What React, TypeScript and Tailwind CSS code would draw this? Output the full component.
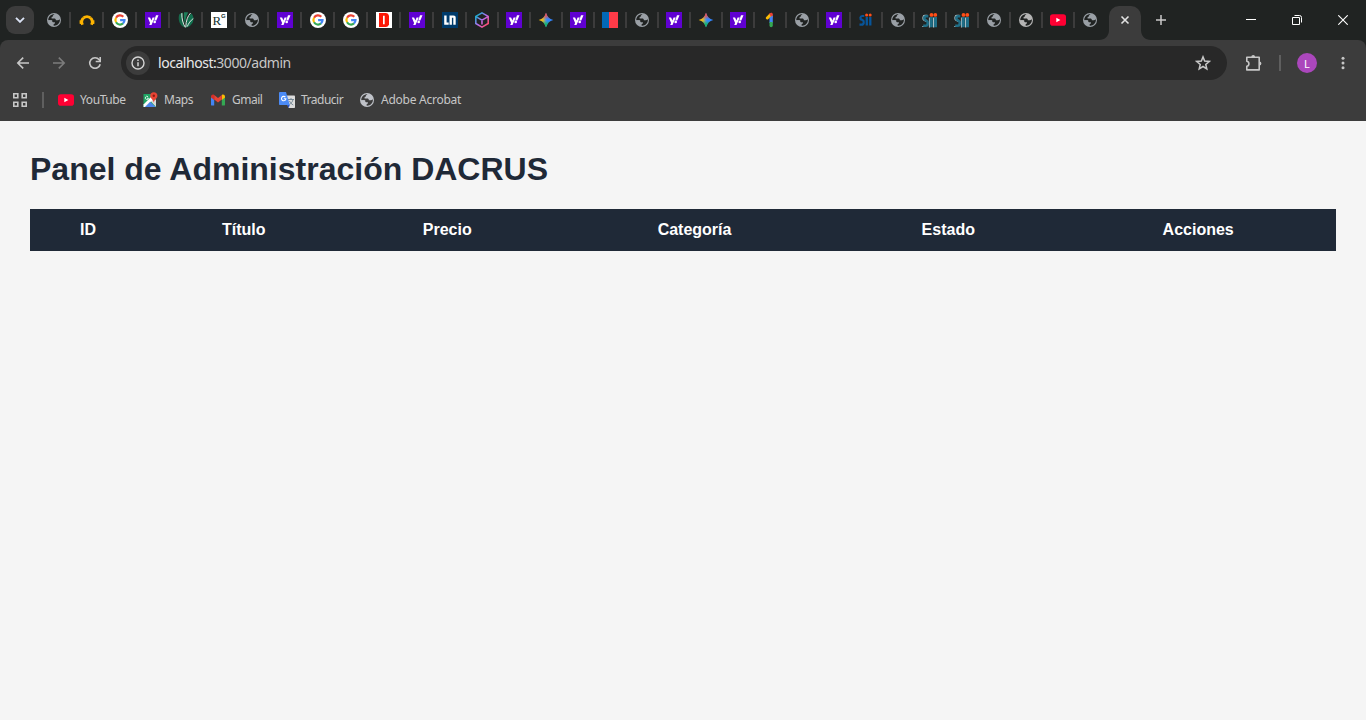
import type { ReactNode } from "react";
import clsx from "clsx";

type Favicon =
  | "globe"
  | "globeLight"
  | "arch"
  | "google"
  | "yahoo"
  | "leaf"
  | "rg"
  | "d"
  | "ln"
  | "cube"
  | "gemini"
  | "flag"
  | "one"
  | "sii"
  | "siiGray"
  | "youtube";

const tabs: Favicon[] = [
  "globe", "arch", "google", "yahoo", "leaf", "rg", "globe", "yahoo", "google",
  "google", "d", "yahoo", "ln", "cube", "yahoo", "gemini", "yahoo", "flag",
  "globe", "yahoo", "gemini", "yahoo", "one", "globe", "yahoo", "sii", "globe",
  "siiGray", "siiGray", "globe", "globeLight", "youtube", "globe",
];

// tabs shrink by one pixel after this index
const WIDE_TABS = 13;

const columns = ["ID", "Título", "Precio", "Categoría", "Estado", "Acciones"];

const Svg = ({ children }: { children: ReactNode }) => (
  <svg viewBox="0 0 16 16" className="block size-4 shrink-0">
    {children}
  </svg>
);

const Globe = ({ color, land }: { color: string; land: string }) => (
  <Svg>
    <circle cx="8" cy="8" r="7" fill={color} />
    <path
      d="M8.6 2.3 6.9 3.4v1.2L5.6 5.1v1.4h2.8c.8 0 1.4.6 1.4 1.3v.5h2.1c.7 0 1.2-.5 1.6-1l.4.7c0 3-2.5 5.6-5.7 5.7l-.8-.1v-1.4l1.5-.6v-1.3H7.6c-.9 0-1.4-.6-1.4-1.4v-.6H2.3C2.1 5 4.700 2.200 8.600 2.300z"
      fill={land}
    />
    <path d="M9.500 2.500 9 4.300l1 1.200 1.500.1 1-.9C11.900 3.600 10.800 2.700 9.500 2.500z" fill={color} />
    <path d="M2.200 8.300 5.500 8.300 6.200 10.600 7.400 11.400v2.400C4.500 13.500 2.300 11.200 2.200 8.300z" fill={color} />
  </Svg>
);

const YouTube = () => (
  <Svg>
    <rect x="0" y="2.3" width="16" height="11.4" rx="2.8" fill="#ff0033" />
    <path d="M6.300 5.800 10.400 8l-4.100 2.300z" fill="#fff" />
  </Svg>
);

const Google = () => (
  <Svg>
    <circle cx="8" cy="8" r="8" fill="#fff" />
    <g fill="none" strokeWidth="2.200">
      <path d="M4.050 5.700A4.560 4.560 0 0 1 11.300 4.850" stroke="#ea4335" />
      <path d="M4.050 10.300A4.560 4.560 0 0 1 4.050 5.700" stroke="#fbbc05" />
      <path d="M11 11.450A4.560 4.560 0 0 1 4.050 10.300" stroke="#34a853" />
      <path d="M8.100 8.200h4.400A4.560 4.560 0 0 1 11 11.450" stroke="#4285f4" />
    </g>
  </Svg>
);

const STAR = "M8 .7C9.200 4.700 11.300 6.800 15.300 8 11.300 9.200 9.200 11.300 8 15.300 6.800 11.300 4.700 9.200.700 8 4.700 6.800 6.800 4.700 8 .700z";

const Gemini = () => (
  <Svg>
    <defs>
      <linearGradient id="gemX" x1="0" x2="1">
        <stop offset="0.1" stopColor="#fbc10b" />
        <stop offset="0.3" stopColor="#e0b92c" />
        <stop offset="0.5" stopColor="#4c92e0" />
        <stop offset="0.6" stopColor="#3186ff" />
      </linearGradient>
      <linearGradient id="gemY" x1="0" y1="0" x2="0" y2="1">
        <stop offset="0.15" stopColor="#f8494a" />
        <stop offset="0.45" stopColor="#f8494a" stopOpacity="0" />
        <stop offset="0.55" stopColor="#12b76a" stopOpacity="0" />
        <stop offset="0.8" stopColor="#12b76a" />
      </linearGradient>
    </defs>
    <path d={STAR} fill="url(#gemX)" />
    <path d={STAR} fill="url(#gemY)" />
  </Svg>
);

const Sii = ({ gray }: { gray?: boolean }) => (
  <Svg>
    {gray && (
      <g stroke="#a9bcc2" strokeWidth="1.200" fill="none">
        <path d="M5.500 3.300H2.700C.600 3.300.500 7 1.600 8L4.200 9.500M.300 14.500H4M7.500 5.500v10M11.600 5.500v10" />
      </g>
    )}
    {gray ? (
      <g stroke="#1f6e87" fill="none">
        <path d="M6.300 4.300H4.200C2 4.300 1.900 7.500 3.500 8.100l1 .6c2 1.100 1.500 5-.7 5H1.200" strokeWidth="2.600" />
        <path d="M9.300 5v10.300M13.500 5v10.300" strokeWidth="3" />
      </g>
    ) : (
      <g stroke="#07559a" fill="none">
        <path d="M6.300 4H4.200C2 4 1.900 7 3.500 7.600l1 .5c2 1 1.500 4.500-.7 4.500H1.500" strokeWidth="2.200" />
        <path d="M8.800 5v8.500M12.300 5v8.500" strokeWidth="2.300" />
      </g>
    )}
    <circle cx={gray ? 9.5 : 8.6} cy="2.9" r={gray ? 1.9 : 1.5} fill="#ff4e17" />
    <circle cx={gray ? 13.3 : 12.2} cy="2.9" r={gray ? 1.9 : 1.5} fill="#ff4e17" />
  </Svg>
);

const TabIcon = ({ name }: { name: Favicon }) => {
  switch (name) {
    case "globe":
      return <Globe color="#9aa0a6" land="#202322" />;
    case "globeLight":
      return <Globe color="#b5b5b5" land="#202322" />;
    case "youtube":
      return <YouTube />;
    case "google":
      return <Google />;
    case "gemini":
      return <Gemini />;
    case "sii":
      return <Sii />;
    case "siiGray":
      return <Sii gray />;
    case "arch":
      return (
        <Svg>
          <path d="M3.500 12.700C1.300 7.800 4.500 4.700 8 4.700s6.700 3.100 4.500 8" fill="none" stroke="#fdb400" strokeWidth="2.700" />
          <path d="M.6 8.300 3 8.600v3.700l-2.400-.6zM15.400 8.300l-2.400.3v3.700l2.400-.6z" fill="#fdb400" />
          <path d="m3.400 4.700 1 1.300M12.600 4.700l-1 1.300" stroke="#6b500c" strokeWidth=".6" />
        </Svg>
      );
    case "yahoo":
      return (
        <svg viewBox="0 0 16 16" className="block size-4 shrink-0 bg-[#6001d2]">
          <path d="M2.800 5.600h2.300l1.300 2.900 1.200-2.900h2.200L6.500 13.100H4.200l.9-2.100z" fill="#fff" />
          <path d="M11 3.200h2.500L11.300 8.500H9.200z" fill="#fff" />
          <circle cx="9.700" cy="10" r="1.300" fill="#fff" />
        </svg>
      );
    case "leaf":
      return (
        <Svg>
          <path d="M1.200 2.500C2.300 1.500 3.500.900 5 .500 4.500 5 5.300 10.500 7 15.600 2.300 14-.500 8.500 1.200 2.500z" fill="#176b4c" />
          <path d="M6 .300c1.500-.3 3-.2 4.200.2C8 4 7 8.500 7.300 13 6 9 5.600 4.500 6 .300z" fill="#1c7d59" />
          <path d="M8 15.700C7.600 9 9.500 4.300 13.500 1.500c3.500 4.500 2.500 11.700-5.500 14.200z" fill="#12704f" />
          <path d="M3.800 1.200C3.600 6.500 5 12 7.400 15.500M7.800 15C8 8.500 9.700 4 12.600 1M9.300 14.500C10.500 11.500 12.500 8.500 15.300 6.500" fill="none" stroke="#dde6e1" strokeWidth="1" />
        </Svg>
      );
    case "rg":
      return (
        <span className="relative block size-4 shrink-0 overflow-hidden bg-white text-[#17322e]">
          <span className="absolute top-[2px] left-[1.5px] font-['Liberation_Serif',serif] text-[13px] leading-[14px]">R</span>
          <span className="absolute top-[1px] left-[10px] font-['Liberation_Sans',sans-serif] text-[6px] leading-[7px] font-bold">G</span>
        </span>
      );
    case "d":
      return (
        <Svg>
          <path d="M0 0h16v16H0z" fill="#fff" />
          <path d="M3 1h7l2 .8 1 2v8.400l-1 2-2 .8H3z" fill="#fb1705" />
          <path d="M7 3.800h1.700v8.400H7z" fill="#fff" />
        </Svg>
      );
    case "ln":
      return (
        <Svg>
          <path d="M0 0h16v16H0z" fill="#003b6b" />
          <path d="M2.200 3.500h2.400v6.900h2.100v2.300H2.200zM7.500 3.500h4c1.500 0 2.200.7 2.200 2.100v7.100h-2.400V5.700h-1.400v7H7.500z" fill="#fff" />
        </Svg>
      );
    case "cube":
      return (
        <Svg>
          <defs>
            <linearGradient id="cube" x1="0" y1="0" x2="1" y2="1">
              <stop offset=".15" stopColor="#22a9cf" />
              <stop offset=".5" stopColor="#b86bf0" />
              <stop offset=".9" stopColor="#ff4a68" />
            </linearGradient>
          </defs>
          <path d="m8 .9 6.200 3.500v7.100L8 15.100l-6.200-3.600V4.400zM1.900 4.600 8 8.100l6.100-3.500M8 8.100V12.500" fill="none" stroke="url(#cube)" strokeWidth="1.600" />
        </Svg>
      );
    case "flag":
      return (
        <span className="flex size-4 shrink-0">
          <span className="w-[7px] bg-[#0168b7]" />
          <span className="flex-1 bg-[#fe3b48]" />
        </span>
      );
    case "one":
      return (
        <Svg>
          <path d="M7 1.500 9.200.700c1 0 1.600.6 1.600 1.600v3.200H6.700z" fill="#ea4335" />
          <path d="M4 5.300 7.200 2l1.800 2.800-3.200 2.600c-1 .6-2.700-.8-1.800-2.100z" fill="#fbbc04" />
          <path d="M7.500 5.600 10.800 3.500V11H7.500z" fill="#4285f4" />
          <path d="M7.500 10h3.300v3.600a1.600 1.600 0 0 1-3.300 0z" fill="#34a853" />
        </Svg>
      );
  }
};

const TabStrip = () => (
  <div className="flex h-10 bg-[#202322]">
    <button className="mt-1.5 ml-1.5 flex size-7 items-center justify-center rounded-[9px] bg-[#3c3c3c]">
      <svg viewBox="0 0 10 6" className="h-1.5 w-2.5">
        <path d="m1 .8 4 4 4-4" fill="none" stroke="#dbe3f5" strokeWidth="1.900" />
      </svg>
    </button>

    <div className="ml-1 flex items-center">
      {tabs.map((tab, i) => (
        <div key={i} className={clsx("flex items-center", i < WIDE_TABS ? "pl-2" : "pl-[7px]")}>
          <TabIcon name={tab} />
          {i < tabs.length - 1 && <span className="ml-[7px] h-4 w-0.5 bg-[#3c3c3c]" />}
        </div>
      ))}
    </div>

    {/* active tab */}
    <div className="relative mt-1.5 ml-[11px] flex h-[34px] w-8 justify-center rounded-t-[10px] bg-[#3c3c3c] pt-[9px]">
      <svg viewBox="0 0 10 10" className="absolute bottom-0 -left-2.5 size-2.5">
        <path d="M10 0v10H0C6 10 10 6 10 0z" fill="#3c3c3c" />
      </svg>
      <svg viewBox="0 0 10 10" className="absolute -right-2.5 bottom-0 size-2.5">
        <path d="M0 0v10h10C4 10 0 6 0 0z" fill="#3c3c3c" />
      </svg>
      <svg viewBox="0 0 10 10" className="size-2.5">
        <path d="m1.500 1.500 7 7M8.500 1.500l-7 7" stroke="#e3e3e3" strokeWidth="1.600" />
      </svg>
    </div>

    <svg viewBox="0 0 12 12" className="mt-3.5 ml-3.5 size-3">
      <path d="M6 1v10M1 6h10" stroke="#c9c9c9" strokeWidth="1.500" />
    </svg>

    <div className="ml-auto flex items-start">
      <svg viewBox="0 0 10 10" className="mt-[15px] mr-9 size-2.5">
        <path d="M0 4.500h10" stroke="#fff" />
      </svg>
      <svg viewBox="0 0 10 10" className="mt-[15px] mr-9 size-2.5">
        <path d="M.5 2.500h7v7h-7zM2.500.5h5a2 2 0 0 1 2 2v5" fill="none" stroke="#fff" />
      </svg>
      <svg viewBox="0 0 10 10" className="mt-[15px] mr-[18px] size-2.5">
        <path d="m.3.3 9.400 9.400M9.700.3.3 9.700" stroke="#fff" strokeWidth="1.100" />
      </svg>
    </div>
  </div>
);

const Toolbar = () => (
  <div className="flex h-[46px] items-center">
    <svg viewBox="0 0 14 14" className="ml-4 size-3.5">
      <path d="M13 7H2M7.200 1.600 1.800 7l5.400 5.400" fill="none" stroke="#c7c7c7" strokeWidth="1.600" />
    </svg>
    <svg viewBox="0 0 14 14" className="ml-[22px] size-3.5">
      <path d="M1 7h11M6.800 1.600 12.200 7l-5.400 5.400" fill="none" stroke="#7c7c7c" strokeWidth="1.600" />
    </svg>
    <svg viewBox="0 0 14 14" className="ml-[22px] size-3.5">
      <path d="M12.200 8.200A5.300 5.300 0 1 1 11.200 3.700L12 4.700" fill="none" stroke="#c7c7c7" strokeWidth="1.600" />
      <path d="M12.200.900v4.600H7.700" fill="none" stroke="#c7c7c7" strokeWidth="1.600" />
    </svg>

    <div className="ml-[19px] flex h-[34px] w-[1106px] items-center rounded-full bg-[#282828] pr-4 pl-[5px]">
      <span className="flex size-6 items-center justify-center rounded-full bg-[#3c3c3c]">
        <svg viewBox="0 0 14 14" className="size-3.5">
          <circle cx="7" cy="7" r="6" fill="none" stroke="#d5d5d5" strokeWidth="1.400" />
          <path d="M7 6.200v4M7 3.500v1.500" stroke="#d5d5d5" strokeWidth="1.500" />
        </svg>
      </span>
      <span className="ml-2 text-[14px] leading-none tracking-[-0.46px] text-[#e8e8e8]">
        localhost:<span className="text-[#c7c7c7]">3000/admin</span>
      </span>
      <svg viewBox="0 0 16 16" className="ml-auto size-4">
        <path d="m8 1.900 1.650 4.100 4.600.4-3.500 3 1.050 4.450L8 11.500l-3.800 2.350L5.250 9.400l-3.500-3 4.600-.4z" fill="none" stroke="#c7c7c7" strokeWidth="1.500" />
      </svg>
    </div>

    <svg viewBox="0 0 18 18" className="ml-[18px] size-[18px]">
      <path
        d="M1.800 3.200H14.200V15.900H1.800V12.300C4.600 11.800 4.600 7.700 1.800 7.200z"
        fill="none"
        stroke="#c7c7c7"
        strokeWidth="1.600"
        strokeLinejoin="round"
      />
      <path d="M6.300 3a1.900 1.900 0 0 1 3.800 0zM14.500 7.600a1.900 1.900 0 0 1 0 3.800z" fill="#c7c7c7" />
    </svg>
    <span className="ml-4 h-4 w-0.5 bg-[#5f5f5f]" />
    <span className="ml-4 flex size-5 items-center justify-center rounded-full bg-[#ab47bc] text-[11px] leading-none text-white">
      L
    </span>
    <svg viewBox="0 0 4 14" className="ml-6 h-3.5 w-1">
      <g fill="#c7c7c7">
        <circle cx="2" cy="2.200" r="1.500" />
        <circle cx="2" cy="7" r="1.500" />
        <circle cx="2" cy="11.800" r="1.500" />
      </g>
    </svg>
  </div>
);

const Bookmark = ({ icon, label, className }: { icon: ReactNode; label: string; className: string }) => (
  <div className={clsx("flex items-center whitespace-nowrap", className)}>
    {icon}
    <span className="pl-1.5">{label}</span>
  </div>
);

const BookmarksBar = () => (
  <div className="flex h-[27px] items-center text-[12px] leading-none text-[#c7c7c7]">
    <svg viewBox="0 0 14 14" className="ml-[13px] size-3.5">
      <path d="M.8.8h4v4h-4zM9.200.8h4v4h-4zM.8 9.200h4v4h-4zM9.200 9.200h4v4h-4z" fill="none" stroke="#c7c7c7" strokeWidth="1.600" />
    </svg>
    <span className="ml-[15px] h-4 w-0.5 bg-[#5f5f5f]" />
    <Bookmark icon={<YouTube />} label="YouTube" className="ml-3.5 w-[84px] tracking-[-0.4px]" />
    <Bookmark
      className="w-[68px] tracking-[-0.45px]"
      label="Maps"
      icon={
        <Svg>
          <path d="M1.500 2h12.500v13H1.500z" fill="#1fa463" />
          <path d="M11 5.500 14 8v7L8.500 9z" fill="#d6d9da" />
          <path d="m1.500 12.500 8-8 2 2.500-8 8h-2z" fill="#fff" />
          <path d="m3 15 5.200-5.200L13.500 15z" fill="#4d86ec" />
          <path d="M6 4.700A1.600 1.600 0 1 0 6.500 6.200H5" fill="none" stroke="#fff" strokeWidth=".8" />
          <path d="M11.800.3c2.200 0 3.600 1.500 3.600 3.500 0 2.700-3.100 3.400-3.600 7-.5-3.600-3.600-4.300-3.600-7 0-2 1.400-3.500 3.600-3.500z" fill="#ea4335" />
          <circle cx="11.800" cy="3.800" r="1.200" fill="#8a1d12" />
        </Svg>
      }
    />
    <Bookmark
      className="w-[69px] tracking-[-0.5px]"
      label="Gmail"
      icon={
        <Svg>
          <path d="M1 4v8.700c0 .5.400.9.900.9h2.300V7.500z" fill="#4285f4" />
          <path d="M15 4v8.700c0 .5-.4.9-.9.900h-2.300V7.500z" fill="#34a853" />
          <path d="M1 4.500C1 2.700 3 2 4.200 3v5L1 5.600z" fill="#d62f28" />
          <path d="M15 4.500C15 2.700 13 2 11.800 3v5L15 5.600z" fill="#fbbc04" />
          <path d="M4.200 3 8 5.900 11.800 3v4.500L8 10.400 4.200 7.500z" fill="#ea4335" />
        </Svg>
      }
    />
    <Bookmark
      className="w-20 tracking-[-0.5px]"
      label="Traducir"
      icon={
        <Svg>
          <path d="M6 3.500h9.200c.5 0 .8.300.8.800v10.900c0 .5-.3.800-.8.800H9.500z" fill="#dcdcdc" />
          <path d="M9 7.500h6M12 6v1.500M14 7.500c-.4 2.500-2 4-3.700 5M10.500 9c.8 1.800 2 3 3.800 4" fill="none" stroke="#6b7f8c" strokeWidth=".9" />
          <path d="M.8 0H7l3.800 13H.8c-.5 0-.8-.3-.8-.8V.800C0 .3.300 0 .800 0z" fill="#4c8bf5" />
          <path d="m8 13h2.800l-1.300 3z" fill="#2a56c6" />
          <path d="M6.400 5.200A2.200 2.200 0 1 0 6.900 6.700H4.800" fill="none" stroke="#fff" strokeWidth="1.100" />
        </Svg>
      }
    />
    <Bookmark icon={<Globe color="#c0c3c9" land="#3c3c3c" />} label="Adobe Acrobat" className="tracking-[-0.25px]" />
  </div>
);

const App = () => {
  return (
    <div className="flex h-[720px] w-[1366px] flex-col overflow-hidden bg-[#f5f5f5]">
      <header className="bg-[#202322] font-['Noto_Sans','Open_Sans',sans-serif]">
        <TabStrip />
        <div className="h-[81px] rounded-t-lg bg-[#3c3c3c]">
          <Toolbar />
          <BookmarksBar />
        </div>
      </header>

      <main className="flex-1 px-[30px] pt-[30px] font-['Liberation_Sans',Arial,sans-serif]">
        <h1 className="text-[32px] leading-9 font-bold text-[#1f2937]">Panel de Administración DACRUS</h1>
        <table className="mt-[22px] w-full border-collapse">
          <thead>
            <tr className="bg-[#1f2937] text-white">
              {columns.map((column) => (
                <th key={column} className="p-3 text-center text-base leading-[18px] font-bold">
                  {column}
                </th>
              ))}
            </tr>
          </thead>
        </table>
      </main>
    </div>
  );
};

export default App;
